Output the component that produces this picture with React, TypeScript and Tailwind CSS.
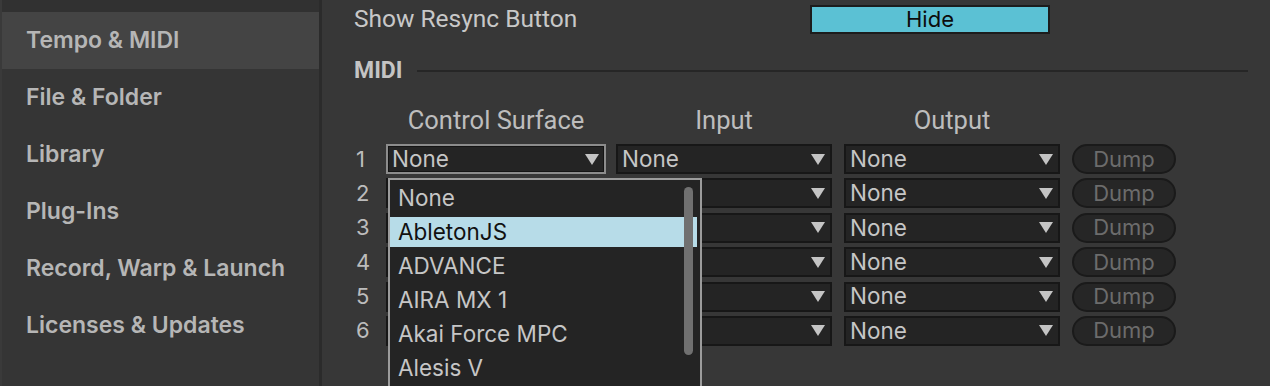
import React from "react";

const sections = [
  "Tempo & MIDI",
  "File & Folder",
  "Library",
  "Plug-Ins",
  "Record, Warp & Launch",
  "Licenses & Updates",
];

const surfaces = ["None", "AbletonJS", "ADVANCE", "AIRA MX 1", "Akai Force MPC", "Alesis V"];

function Arrow() {
  return (
    <svg width="14" height="11" viewBox="0 0 14 11" className="shrink-0">
      <polygon points="0,0 14,0 7,11" fill="#c4c4c4" />
    </svg>
  );
}

// hidden = text sits under the open menu, so don't draw it
function Chooser({ width, focused, hidden }: { width: string; focused?: boolean; hidden?: boolean }) {
  return (
    <div
      className={`${width} h-[30px] flex items-center justify-between pl-[4px] pr-[5px] bg-[#242424] border-2 ${
        focused ? "border-[#8c8c8c] shadow-[inset_0_0_0_1px_#141414]" : "border-[#171717]"
      }`}
    >
      <span className="text-[22.5px] leading-none text-[#c6c6c6]">{hidden ? "" : "None"}</span>
      <Arrow />
    </div>
  );
}

export default function App() {
  const rows = [1, 2, 3, 4, 5, 6];

  return (
    <div className="flex h-[386px] w-[1270px] overflow-hidden bg-[#373737] font-['Inter',sans-serif]">
      {/* left nav */}
      <aside className="w-[322px] shrink-0 flex flex-col bg-[#353535] border-l-2 border-l-[#3a3a3a] border-r-[3px] border-r-[#2b2b2b]">
        <div className="h-[12px] bg-[#313131]" />
        {sections.map((s, i) => (
          <div
            key={s}
            className={`h-[57px] flex items-center pl-[24px] text-[23px] font-semibold text-[#b6b6b6] ${
              i === 0 ? "bg-[#444444]" : ""
            }`}
          >
            {s}
          </div>
        ))}
      </aside>

      {/* settings */}
      <main className="relative flex-1 pl-[32px] pr-[22px] pt-[5px]">
        <div className="flex items-center h-[29px]">
          <div className="w-[456px] text-[24.5px] text-[#c8c8c8] font-['Roboto',sans-serif]">Show Resync Button</div>
          <div className="w-[240px] h-[29px] flex items-center justify-center bg-[#5bc1d4] border-2 border-[#1c1c1c] text-[22px] text-[#0c0c0c]">
            Hide
          </div>
        </div>

        <div className="mt-[25px] h-[24px] flex items-center gap-[14px]">
          <span className="text-[23px] font-bold text-[#c4c4c4] font-['Roboto',sans-serif]">MIDI</span>
          <div className="flex-1 h-[2px] bg-[#262626]" />
        </div>

        <div className="mt-[22px] h-[30px] flex items-center text-[25.5px] text-[#bdbdbd] font-['Roboto',sans-serif]">
          <div className="w-[32px]" />
          <div className="w-[220px] text-center">Control Surface</div>
          <div className="w-[216px] ml-[10px] text-center">Input</div>
          <div className="w-[216px] ml-[12px] text-center">Output</div>
        </div>

        <div className="mt-[9px] flex flex-col gap-[4.4px]">
          {rows.map((n) => (
            <div key={n} className="flex items-center h-[30px]">
              <div className="w-[32px] pl-[2px] text-[22px] text-[#bcbcbc]">{n}</div>
              <Chooser width="w-[220px]" focused={n === 1} hidden={n > 1} />
              <div className="ml-[10px]">
                <Chooser width="w-[216px]" hidden={n > 1} />
              </div>
              <div className="ml-[12px]">
                <Chooser width="w-[216px]" />
              </div>
              <div className="ml-[12px] w-[104px] h-[30px] flex items-center justify-center rounded-full bg-[#262626] border-2 border-[#1a1a1a] text-[22px] text-[#6c6c6c]">
                Dump
              </div>
            </div>
          ))}
        </div>

        {/* open control surface menu */}
        <div className="absolute left-[66px] top-[178px] w-[314px] h-[230px] bg-[#242424] border-2 border-[#9c9c9c]">
          <div className="pt-[3px] flex flex-col gap-[4px]">
            {surfaces.map((s, i) => (
              <div
                key={s}
                className={`h-[30px] mr-[3px] flex items-center pl-[8px] text-[22.5px] ${
                  i === 1 ? "bg-[#b7dce8] text-[#111111]" : "text-[#c6c6c6]"
                }`}
              >
                {s}
              </div>
            ))}
          </div>
          <div className="absolute left-[294px] top-[7px] w-[9px] h-[168px] rounded-full bg-[#707070]" />
        </div>
      </main>
    </div>
  );
}
